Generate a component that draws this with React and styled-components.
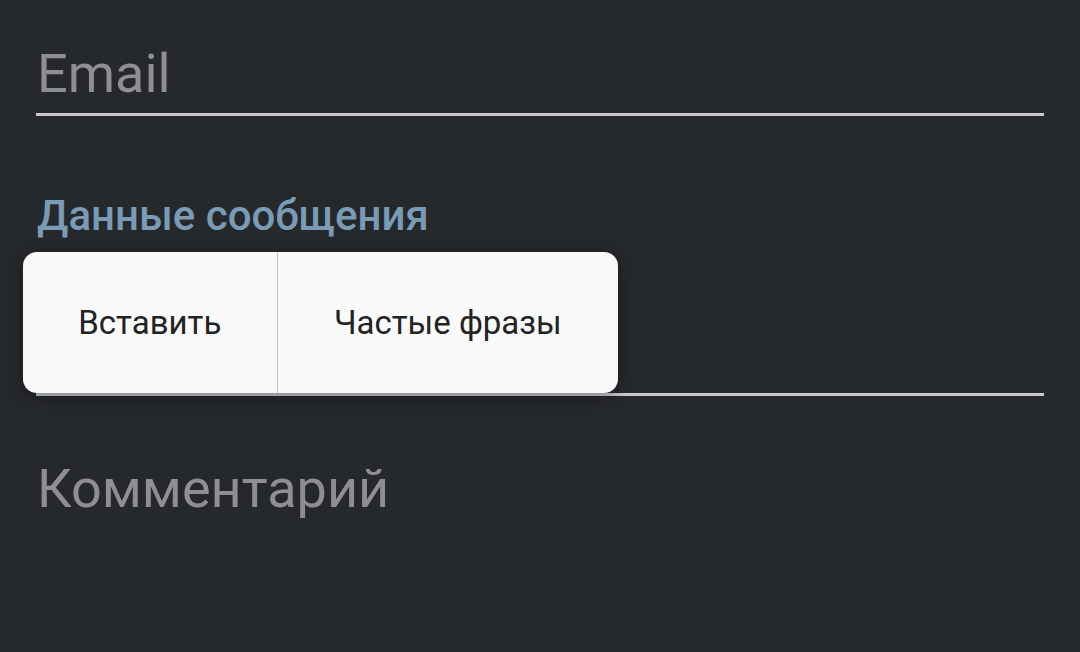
import React from "react";
import styled, { createGlobalStyle } from "styled-components";

const GlobalStyle = createGlobalStyle`
    html, body {
        margin: 0;
        padding: 0;
        background: #26292c;
        font-family: Roboto, "Noto Sans", sans-serif;
    }
`;

const Screen = styled.div`
    width: 1080px;
    height: 652px;
    overflow: hidden;
    background: #26292c;
    padding: 0 36px;
    box-sizing: border-box;
    display: flex;
    flex-direction: column;
`;

const Field = styled.div`
    position: relative;
    height: ${(props) => props.height}px;
    border-bottom: ${(props) => (props.line ? "3px solid #c8c9ca" : "none")};
    display: flex;
    align-items: flex-end;
    box-sizing: border-box;
`;

const Placeholder = styled.div`
    font-size: 54px;
    line-height: 1;
    color: #8e8f91;
    padding-left: 1px;
    margin-top: ${(props) => props.mt || 0}px;
    padding-bottom: ${(props) => props.pb || 0}px;
`;

const SectionTitle = styled.div`
    margin-top: 79px;
    font-size: 42px;
    font-weight: 500;
    color: #7a9bb6;
    padding-left: 1px;
    line-height: 1;
`;

const Menu = styled.div`
    position: absolute;
    left: -13px;
    top: 15px;
    width: 595px;
    height: 141px;
    background: #fafafa;
    border-radius: 14px;
    box-shadow: 0 4px 16px rgba(0, 0, 0, 0.35);
    display: flex;
    overflow: hidden;
`;

const MenuItem = styled.div`
    width: ${(props) => props.width}px;
    display: flex;
    align-items: center;
    justify-content: center;
    font-size: 33px;
    color: #222324;
    border-left: ${(props) => (props.divider ? "1px solid #c2c2c2" : "none")};
`;

export default function App() {
    return (
        <>
            <GlobalStyle />
            <Screen>
                <Field height={116} line>
                    <Placeholder pb={12}>Email</Placeholder>
                </Field>
                <SectionTitle>Данные сообщения</SectionTitle>
                <Field height={159} line>
                    <Menu>
                        <MenuItem width={254}>Вставить</MenuItem>
                        <MenuItem width={341} divider>
                            Частые фразы
                        </MenuItem>
                    </Menu>
                </Field>
                <Placeholder mt={66}>Комментарий</Placeholder>
            </Screen>
        </>
    );
}
